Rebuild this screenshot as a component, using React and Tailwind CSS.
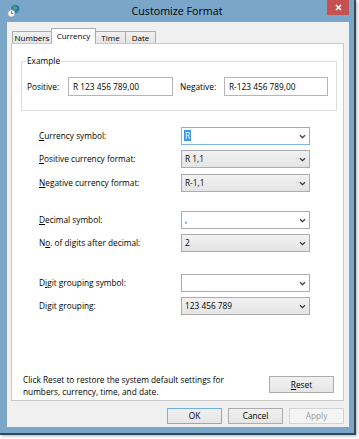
import React from "react";

function WinIcon() {
  return (
    <svg width="13" height="14" viewBox="0 0 13 14">
      <circle cx="8.3" cy="5" r="4.2" fill="#2a74c9" />
      <path d="M5.6 3 Q7 1.6 8.8 2.4 Q10.6 3.4 10 5.4 Q8.6 5 7.6 6 Q6.2 5.4 5.6 3 Z" fill="#45b03a" />
      <path d="M9.5 7.4 Q11 7 12 5.8 Q11.8 8 10 8.8 Z" fill="#45b03a" />
      <circle cx="4.4" cy="9.4" r="3.7" fill="#f6f6f6" stroke="#8797a6" strokeWidth="0.8" />
      <path d="M4.4 7.2 V9.5 H6.2" stroke="#4a4a4a" strokeWidth="0.7" fill="none" />
    </svg>
  );
}

function Chevron() {
  return (
    <svg width="7" height="5" viewBox="0 0 7 5" className="shrink-0">
      <path d="M1 1.2 L3.5 3.6 L6 1.2" fill="none" stroke="#3a3a3a" strokeWidth="1.3" />
    </svg>
  );
}

function ComboList({ children }) {
  return (
    <div className="w-[129px] h-[18px] flex items-center justify-between pl-[3px] pr-[3px] border border-[#acacac] bg-linear-to-b from-[#f2f2f2] to-[#e4e4e4]">
      <span>{children}</span>
      <Chevron />
    </div>
  );
}

function ComboEdit({ children, focused }) {
  return (
    <div
      className={
        focused
          ? "w-[129px] h-[18px] flex items-center justify-between pl-[2px] pr-[3px] border border-[#7eb4ea] bg-white"
          : "w-[129px] h-[18px] flex items-center justify-between pl-[3px] pr-[3px] border border-[#acacac] bg-white"
      }
    >
      <span>{children}</span>
      <Chevron />
    </div>
  );
}

function Row({ label, className, children }) {
  return (
    <div className={"flex items-center h-[18px] pl-[27px] " + (className || "")}>
      <span className="w-[142px]">{label}</span>
      {children}
    </div>
  );
}

export default function App() {
  return (
    <div className="w-[359px] h-[439px] bg-white font-['Open_Sans','Noto_Sans',sans-serif] text-[8.3px] leading-[12px] text-black">
      <div className="w-[356px] h-[435px] flex flex-col bg-[#7aa7c9] border-r-2 border-b-2 border-[#33495a] shadow-[1px_1px_3px_rgba(0,0,0,0.3)]">
        {/* Title bar */}
        <div className="h-[22px] shrink-0 grid grid-cols-[1fr_auto_1fr] items-center">
          <div className="pl-[7px] flex items-center">
            <WinIcon />
          </div>
          <div className="text-[10.7px] leading-[14px] text-black">Customize Format</div>
          <div className="self-start flex justify-end pr-[5px]">
            <div className="w-[22px] h-[15px] bg-[#c75050] flex items-center justify-center">
              <svg width="7" height="7" viewBox="0 0 7 7">
                <path d="M1 1 L6 6 M6 1 L1 6" stroke="#ffffff" strokeWidth="1.6" />
              </svg>
            </div>
          </div>
        </div>

        {/* Client area */}
        <div className="ml-[7px] w-[342px] h-[405px] bg-[#f0f0f0] flex flex-col">
          {/* Tabs */}
          <div className="relative z-10 flex items-end h-[16px] mt-[6px] ml-[5px] text-[8px]">
            <div className="w-[40px] h-[12px] mb-px border border-b-0 border-[#acacac] bg-linear-to-b from-[#f0f0f0] to-[#e5e5e5] flex items-center justify-center">
              Numbers
            </div>
            <div className="w-[45px] h-[16px] -ml-px border border-b-0 border-[#acacac] bg-white flex justify-center pt-px">
              Currency
            </div>
            <div className="w-[31px] h-[12px] mb-px -ml-px border border-b-0 border-[#acacac] bg-linear-to-b from-[#f0f0f0] to-[#e5e5e5] flex items-center justify-center">
              Time
            </div>
            <div className="w-[31px] h-[12px] mb-px -ml-px border border-b-0 border-[#acacac] bg-linear-to-b from-[#f0f0f0] to-[#e5e5e5] flex items-center justify-center">
              Date
            </div>
          </div>

          {/* Tab panel */}
          <div className="-mt-px ml-[4px] w-[333px] h-[358px] border border-[#c9c9c9] bg-white flex flex-col">
            <fieldset className="ml-[9px] mt-[11px] w-[316px] h-[56px] border border-[#dcdcdc]">
              <legend className="ml-[4px] px-[1px] leading-[12px]">Example</legend>
              <div className="flex items-center mt-[10px] pl-[5px]">
                <span className="w-[41px]">Positive:</span>
                <div className="w-[105px] h-[19px] border border-[#b5b5b5] bg-white flex items-center pl-[4px]">
                  R 123 456 789,00
                </div>
                <span className="ml-[7px] w-[44px]">Negative:</span>
                <div className="w-[104px] h-[19px] border border-[#b5b5b5] bg-white flex items-center pl-[4px]">
                  R-123 456 789,00
                </div>
              </div>
            </fieldset>

            <Row
              className="mt-[16px]"
              label={
                <>
                  <u>C</u>urrency symbol:
                </>
              }
            >
              <ComboEdit focused>
                <span className="bg-[#3399ff] text-white px-[1px]">R</span>
              </ComboEdit>
            </Row>
            <Row
              className="mt-[5px]"
              label={
                <>
                  <u>P</u>ositive currency format:
                </>
              }
            >
              <ComboList>R 1,1</ComboList>
            </Row>
            <Row
              className="mt-[6px]"
              label={
                <>
                  <u>N</u>egative currency format:
                </>
              }
            >
              <ComboList>R-1,1</ComboList>
            </Row>

            <Row
              className="mt-[19px]"
              label={
                <>
                  <u>D</u>ecimal symbol:
                </>
              }
            >
              <ComboEdit>,</ComboEdit>
            </Row>
            <Row
              className="mt-[5px]"
              label={
                <>
                  N<u>o</u>. of digits after decimal:
                </>
              }
            >
              <ComboList>2</ComboList>
            </Row>

            <Row
              className="mt-[22px]"
              label={
                <>
                  D<u>i</u>git grouping symbol:
                </>
              }
            >
              <ComboEdit> </ComboEdit>
            </Row>
            <Row
              className="mt-[5px]"
              label={
                <>
                  Di<u>g</u>it grouping:
                </>
              }
            >
              <ComboList>123 456 789</ComboList>
            </Row>

            <div className="mt-auto mb-[2px] flex items-start justify-between pl-[11px] pr-[9px]">
              <div>
                Click Reset to restore the system default settings for
                <br />
                numbers, currency, time, and date.
              </div>
              <div className="mt-[2px] w-[65px] h-[17px] border border-[#acacac] bg-linear-to-b from-[#f0f0f0] to-[#e5e5e5] flex items-center justify-center">
                <span>
                  <u>R</u>eset
                </span>
              </div>
            </div>
          </div>

          {/* Dialog buttons */}
          <div className="mt-[7px] flex justify-end gap-[6px] pr-[5px]">
            <div className="w-[55px] h-[16px] border border-[#72aee8] bg-linear-to-b from-[#f0f0f0] to-[#e5e5e5] flex items-center justify-center">
              OK
            </div>
            <div className="w-[55px] h-[16px] border border-[#acacac] bg-linear-to-b from-[#f0f0f0] to-[#e5e5e5] flex items-center justify-center">
              Cancel
            </div>
            <div className="w-[55px] h-[16px] border border-[#d2d2d2] bg-[#f4f4f4] text-[#9a9a9a] flex items-center justify-center">
              Apply
            </div>
          </div>
        </div>
      </div>
    </div>
  );
}
